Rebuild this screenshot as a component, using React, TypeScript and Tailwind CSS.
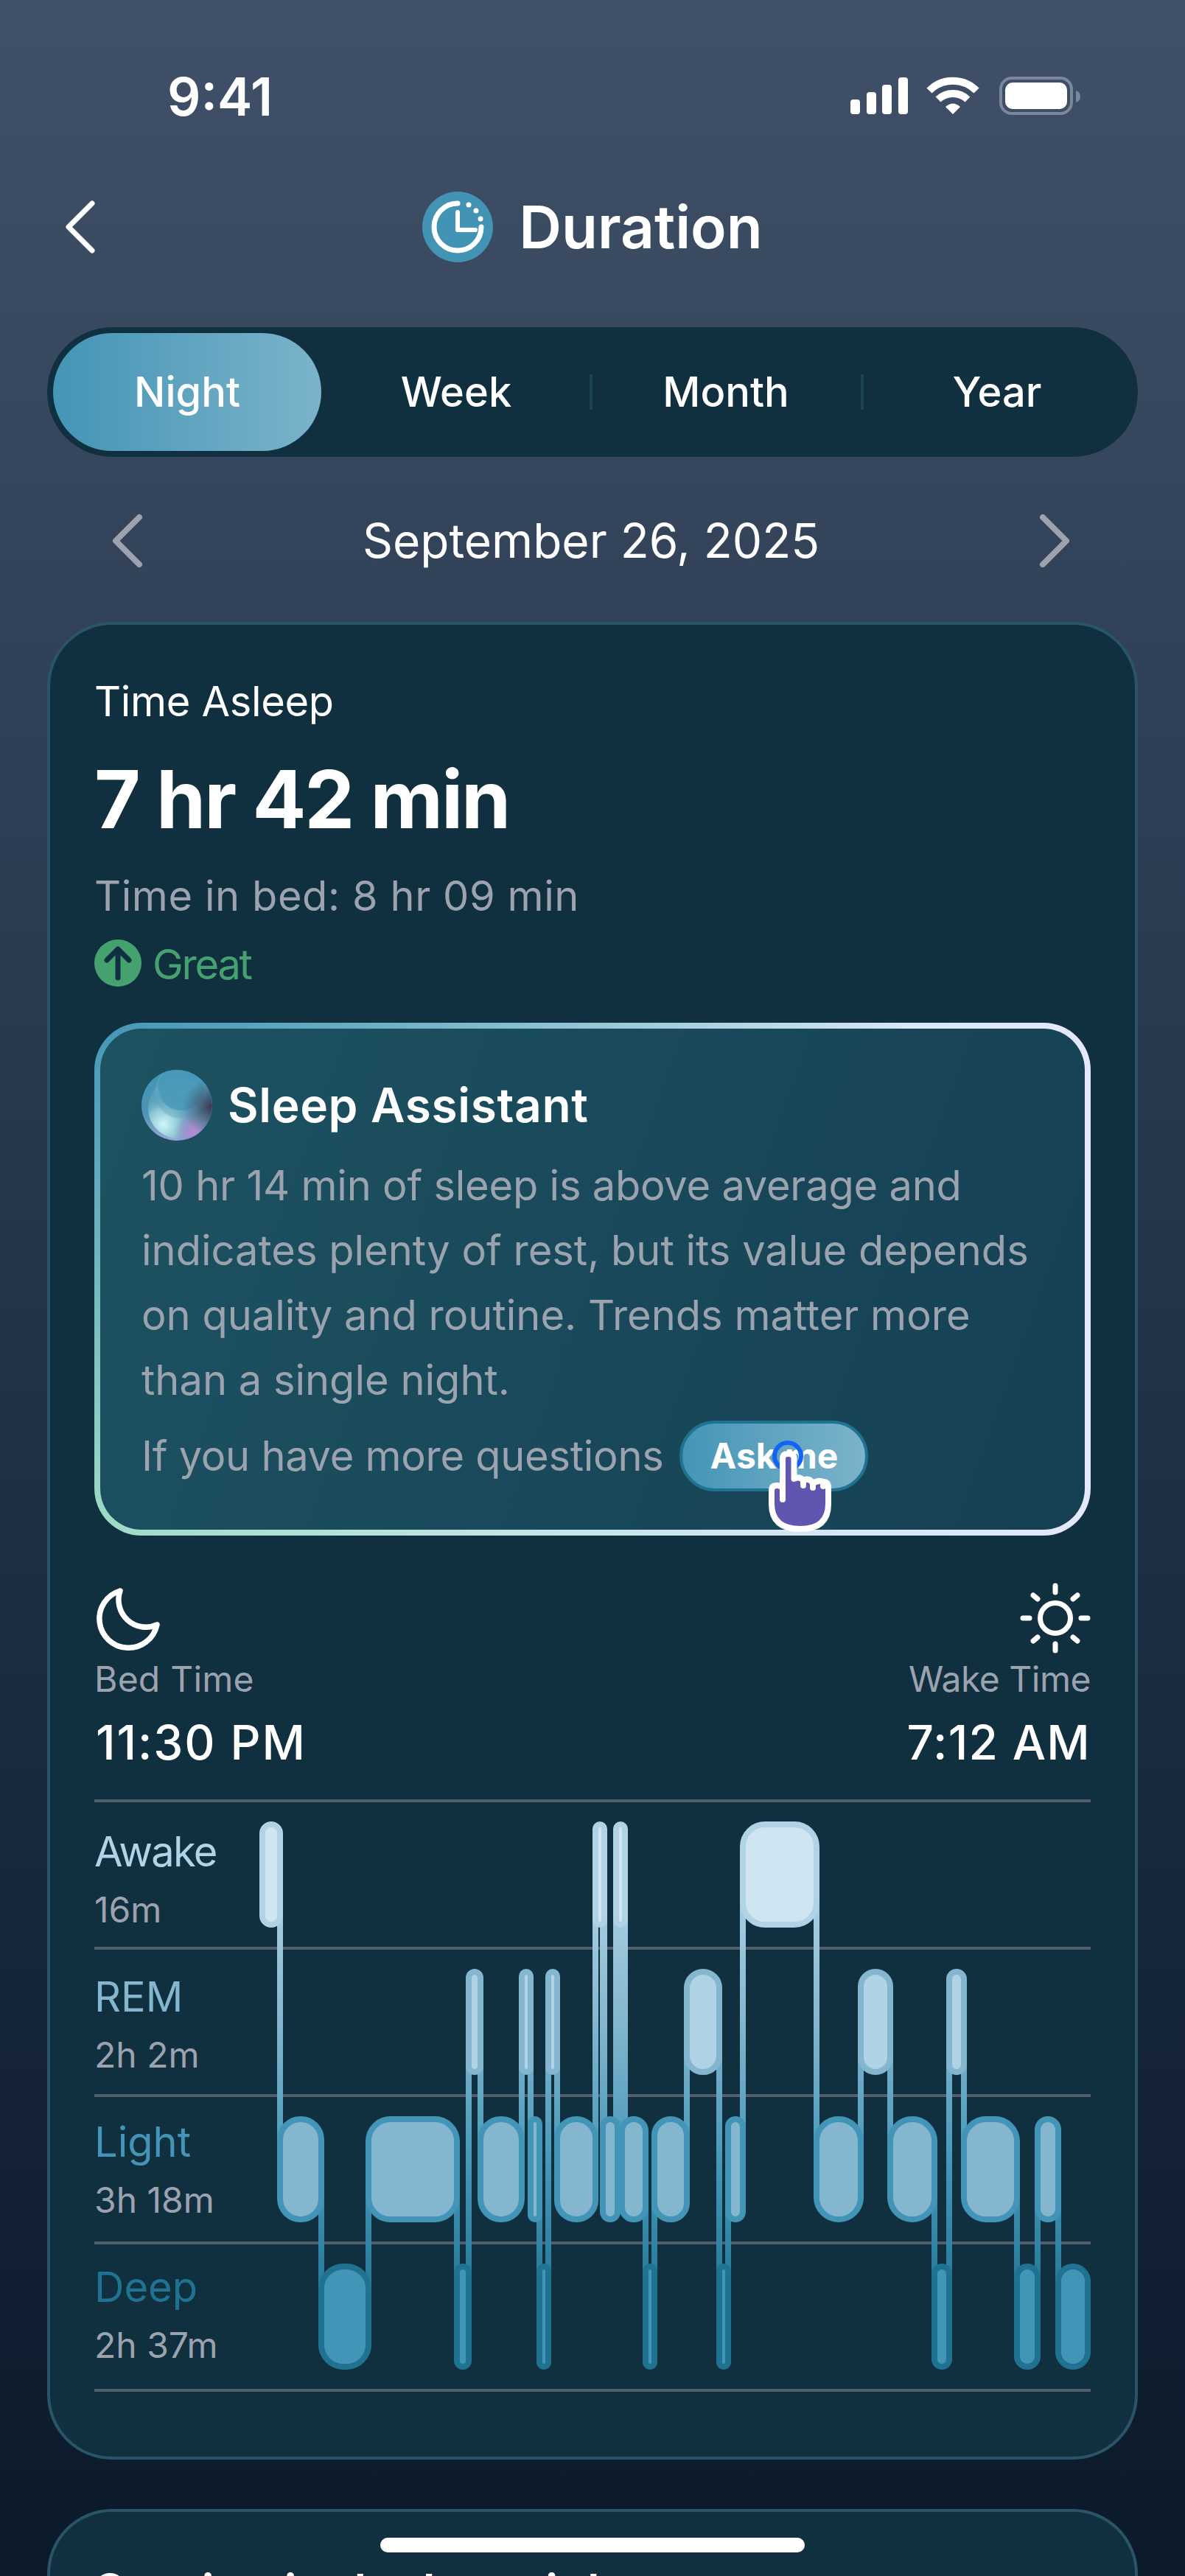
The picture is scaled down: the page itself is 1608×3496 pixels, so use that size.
const lanes = [
  { stroke: "#b0d4e6", fill: "#cfe6f2" },
  { stroke: "#84b7cf", fill: "#b0d2e5" },
  { stroke: "#4395b7", fill: "#84b7cf" },
  { stroke: "#1f7391", fill: "#4395b7" },
];

// lane, left, right in page pixels
const segments: [number, number, number][] = [
  [0, 352, 384],
  [2, 376, 440],
  [3, 432, 504],
  [2, 496, 624],
  [3, 616, 640],
  [1, 632, 656],
  [2, 648, 712],
  [1, 704, 724],
  [2, 716, 736],
  [3, 728, 748],
  [1, 740, 760],
  [2, 752, 812],
  [0, 804, 824],
  [2, 814, 842],
  [0, 832, 852],
  [2, 840, 880],
  [3, 872, 892],
  [2, 884, 936],
  [1, 928, 980],
  [3, 972, 992],
  [2, 984, 1012],
  [0, 1004, 1112],
  [2, 1104, 1172],
  [1, 1164, 1212],
  [2, 1204, 1272],
  [3, 1264, 1292],
  [1, 1284, 1312],
  [2, 1304, 1384],
  [3, 1376, 1412],
  [2, 1404, 1440],
  [3, 1432, 1480],
];

const rows = [
  { name: "Awake", time: "16m", color: "text-[#b0d4e6] tracking-[-0.03em]", pad: "pt-[35px]" },
  { name: "REM", time: "2h 2m", color: "text-[#84b7cf]", pad: "pt-[32px]" },
  { name: "Light", time: "3h 18m", color: "text-[#4395b7]", pad: "pt-[29px]" },
  { name: "Deep", time: "2h 37m", color: "text-[#1f7391]", pad: "pt-[26px]" },
];

const laneTop = (lane: number) => 2472 + lane * 200;

const StagesChart = () => (
  <svg viewBox="128 2442 1352 804" className="absolute left-0 -top-1 w-[1352px] h-[804px]" fill="none">
    <defs>
      <linearGradient id="laneFade" gradientUnits="userSpaceOnUse" x1="0" y1="2544" x2="0" y2="3144">
        <stop offset="0" stopColor="#b0d4e6" />
        <stop offset="0.33" stopColor="#84b7cf" />
        <stop offset="0.67" stopColor="#4395b7" />
        <stop offset="1" stopColor="#1f7391" />
      </linearGradient>
    </defs>
    {segments.slice(1).map(([lane, left], i) => {
      const prev = segments[i];
      const y1 = Math.min(laneTop(lane), laneTop(prev[0])) + 72;
      const y2 = Math.max(laneTop(lane), laneTop(prev[0])) + 72;
      return <rect key={i} x={left} y={y1} width={prev[2] - left} height={y2 - y1} fill="url(#laneFade)" />;
    })}
    {segments.map(([lane, left, right], i) => {
      const w = right - left - 8;
      return (
        <rect
          key={i}
          x={left + 4}
          y={laneTop(lane) + 4}
          width={w}
          height={136}
          rx={Math.min(w / 2, 30)}
          fill={lanes[lane].fill}
          stroke={lanes[lane].stroke}
          strokeWidth="8"
        />
      );
    })}
  </svg>
);

const Orb = () => (
  <svg viewBox="0 0 96 96" className="w-24 h-24 shrink-0">
    <defs>
      <linearGradient id="orbBase" x1="0" y1="0" x2="0" y2="1">
        <stop offset="0" stopColor="#4297b6" />
        <stop offset="0.6" stopColor="#4c93b3" />
        <stop offset="1" stopColor="#9aa6d6" />
      </linearGradient>
      <radialGradient id="orbLight" gradientUnits="userSpaceOnUse" cx="30" cy="74" r="42">
        <stop offset="0" stopColor="#d0f6fc" />
        <stop offset="0.5" stopColor="#8cc9d2" />
        <stop offset="1" stopColor="#4c97b4" stopOpacity="0" />
      </radialGradient>
      <radialGradient id="orbPurple" gradientUnits="userSpaceOnUse" cx="70" cy="84" r="26">
        <stop offset="0" stopColor="#b488d0" />
        <stop offset="1" stopColor="#a080c8" stopOpacity="0" />
      </radialGradient>
      <radialGradient id="orbDark" gradientUnits="userSpaceOnUse" cx="94" cy="50" r="38">
        <stop offset="0" stopColor="#3b3b55" />
        <stop offset="1" stopColor="#3f5068" stopOpacity="0" />
      </radialGradient>
      <clipPath id="orbClip">
        <circle cx="48" cy="48" r="48" />
      </clipPath>
    </defs>
    <circle cx="48" cy="48" r="48" fill="url(#orbBase)" />
    <g clipPath="url(#orbClip)">
      <circle cx="50" cy="52" r="41" fill="#e2f8fb" fillOpacity="0.12" />
      <circle cx="50" cy="52" r="41" fill="url(#orbLight)" />
      <circle cx="54" cy="30" r="36" fill="#6ba6c2" fillOpacity="0.45" />
      <circle cx="54" cy="24" r="31" fill="#4297b6" fillOpacity="0.7" />
      <circle cx="48" cy="48" r="48" fill="url(#orbPurple)" />
      <circle cx="48" cy="48" r="48" fill="url(#orbDark)" />
    </g>
  </svg>
);

const Hand = () => (
  <svg viewBox="0 0 90 116" className="absolute left-[115px] top-[35px] w-[90px] h-[116px] overflow-visible" fill="none">
    <circle cx="28" cy="9" r="18" stroke="#1264f5" strokeWidth="6" />
    <path
      d="M21 56V13Q21 6 28.5 6Q36.5 6 36.5 13V40Q44 36 49 42Q57 38 62 46Q70 41 76 44Q83 44 83 52V74Q83 108 45 108Q6 108 6 74V56Q6 49 13 49Q21 49 21 56Z"
      fill="#6056b0"
      stroke="#ffffff"
      strokeWidth="8"
      strokeLinejoin="round"
    />
    <path d="M21 54V68M49 42V49M62 46V52M76 44V50" stroke="#ffffff" strokeWidth="8" strokeLinecap="round" />
  </svg>
);

export default function App() {
  return (
    <div className="relative w-[1608px] h-[3496px] overflow-hidden bg-gradient-to-b from-[#3f5068] to-[#0a1a2b] text-white font-['Inter',sans-serif]">
      <div className="h-[260px] flex items-center justify-between pl-[227px] pr-[142px]">
        <p className="pt-0.5 text-[71px] leading-none font-semibold">9:41</p>
        <svg viewBox="1154 106 312 52" className="w-[312px] h-[52px]" fill="none">
          <rect x="1154" y="137" width="13" height="20" rx="4" fill="#fff" />
          <rect x="1176" y="127" width="13" height="30" rx="4" fill="#fff" />
          <rect x="1197" y="117" width="13" height="40" rx="4" fill="#fff" />
          <rect x="1219" y="107" width="13" height="50" rx="4" fill="#fff" />
          <path d="M1261 125A45 45 0 0 1 1325 125M1273 137A29 29 0 0 1 1313 137" stroke="#fff" strokeWidth="10" />
          <path d="M1283 147Q1293 138 1303 147L1293 157Z" fill="#fff" />
          <rect x="1358" y="108" width="96" height="48" rx="15" stroke="#7a8899" strokeWidth="4" />
          <rect x="1364" y="114" width="84" height="36" rx="10" fill="#fff" />
          <path d="M1460 125Q1466 127 1466 133Q1466 139 1460 141Z" fill="#7a8899" />
        </svg>
      </div>

      <div className="h-24 grid grid-cols-[1fr_auto_1fr] items-center pl-[88px]">
        <svg viewBox="0 0 44 72" className="w-11 h-[72px]" fill="none">
          <path d="M37 4L5 36L37 68" stroke="#fff" strokeWidth="7" strokeLinecap="round" strokeLinejoin="round" />
        </svg>
        <div className="flex items-center gap-[35px] mr-[88px]">
          <svg viewBox="0 0 96 96" className="w-24 h-24" fill="none">
            <circle cx="48" cy="48" r="48" fill="#4393b5" />
            <path d="M48 16A32 32 0 1 0 80 48" stroke="#fff" strokeWidth="7" strokeLinecap="round" />
            <path d="M48 28V52H72" stroke="#fff" strokeWidth="6" strokeLinecap="round" strokeLinejoin="round" />
            <circle cx="63" cy="18" r="3.5" fill="#fff" />
            <circle cx="73" cy="26" r="3.5" fill="#fff" />
            <circle cx="79" cy="37" r="3.5" fill="#fff" />
          </svg>
          <h1 className="text-[80px] leading-none font-semibold">Duration</h1>
        </div>
      </div>

      <div className="mt-[88px] mx-16 h-[176px] rounded-full bg-[#10303f] p-2 grid grid-cols-4 text-[56px] leading-none font-medium">
        <div className="rounded-full bg-gradient-to-r from-[#4395b6] to-[#7bb3cb] flex items-center justify-center mr-0.5">Night</div>
        <div className="flex items-center justify-center pr-1">Week</div>
        <div className="flex items-center">
          <div className="w-full h-12 -ml-1 flex items-center justify-center border-l-4 border-[#1c4355]">Month</div>
        </div>
        <div className="flex items-center">
          <div className="w-full h-12 -ml-0.5 flex items-center justify-center border-l-4 border-[#1c4355]">Year</div>
        </div>
      </div>

      <div className="mt-20 h-[68px] flex items-center justify-between pl-[152px] pr-[156px]">
        <svg viewBox="0 0 44 72" className="w-11 h-[72px]" fill="none">
          <path d="M37 4L5 36L37 68" stroke="#9ca3af" strokeWidth="8" strokeLinecap="round" strokeLinejoin="round" />
        </svg>
        <p className="text-[64px] leading-none">September 26, 2025</p>
        <svg viewBox="0 0 44 72" className="w-11 h-[72px]" fill="none">
          <path d="M7 4L39 36L7 68" stroke="#9ca3af" strokeWidth="8" strokeLinecap="round" strokeLinejoin="round" />
        </svg>
      </div>

      <div className="mt-[76px] mx-16 rounded-[88px] border-4 border-[#2a5568] bg-[#10303f] px-[60px] pt-[70px] pb-[88px]">
        <p className="text-[56px] leading-[68px] tracking-[-0.006em]">Time Asleep</p>
        <p className="mt-[39px] text-[108px] leading-[120px] font-bold tracking-[-0.02em]">7 hr 42 min</p>
        <p className="mt-[37px] text-[56px] leading-[68px] text-[#9ca3af] tracking-[0.01em]">Time in bed: 8 hr 09 min</p>
        <div className="mt-[25px] h-16 flex items-center gap-[15px]">
          <svg viewBox="0 0 64 64" className="w-16 h-16" fill="none">
            <circle cx="32" cy="32" r="32" fill="#45a26f" />
            <path d="M32 52V14M17 28L32 13L47 28" stroke="#10303f" strokeWidth="7" strokeLinecap="round" strokeLinejoin="round" />
          </svg>
          <p className="pt-1 text-[56px] leading-none text-[#45a26f] tracking-[-0.04em]">Great</p>
        </div>

        <div className="mt-[49px] h-[696px] rounded-[64px] p-2 bg-[radial-gradient(1100px_700px_at_0_0,#4596b8,#4596b800),linear-gradient(90deg,#a0dcc6,#c5e6e8_45%,#e4e8ff)]">
          <div className="h-full rounded-[56px] bg-[linear-gradient(110deg,#1d5261,#154053)] px-[56px] pt-[56px]">
            <div className="flex items-center gap-[21px]">
              <Orb />
              <h2 className="text-[64px] leading-none font-semibold tracking-[0.01em]">Sleep Assistant</h2>
            </div>
            <p className="mt-[17px] text-[56px] leading-[88px] text-[#9ba4ae]">
              <span className="tracking-[-0.004em]">10 hr 14 min of sleep is above average and</span>
              <br />
              indicates plenty of rest, but its value depends
              <br />
              on quality and routine. Trends matter more
              <br />
              than a single night.
            </p>
            <div className="mt-[11px] flex items-center gap-[22px]">
              <p className="text-[56px] leading-none text-[#9ba4ae] tracking-[-0.005em]">If you have more questions</p>
              <div className="relative w-64 h-24 rounded-full border-4 border-[#1f7391] bg-gradient-to-r from-[#4395b6] to-[#7bb3cb] flex items-center justify-center text-[48px] leading-none font-bold">
                Ask me
                <Hand />
              </div>
            </div>
          </div>
        </div>

        <div className="mt-[66px] flex justify-between">
          <div>
            <svg viewBox="0 0 96 96" className="w-24 h-24" fill="none">
              <path d="M35 9A39.5 39.5 0 1 0 85 55A37 37 0 0 1 35 9Z" stroke="#fff" strokeWidth="7.5" strokeLinejoin="round" />
            </svg>
            <p className="mt-[5px] text-[48px] leading-[56px] text-[#9ca3af] tracking-[0.005em]">Bed Time</p>
            <p className="mt-[22px] pl-0.5 text-[64px] leading-[72px] font-medium tracking-[0.03em]">11:30 PM</p>
          </div>
          <div className="flex flex-col items-end">
            <svg viewBox="0 0 96 96" className="w-24 h-24 overflow-visible" fill="none">
              <circle cx="48" cy="46" r="20.5" stroke="#fff" strokeWidth="7" />
              <path
                d="M48 2V11M48 81V90M4 46H13M83 46H92M18 15L24 20M78 15L72 20M18 77L24 72M78 77L72 72"
                stroke="#fff"
                strokeWidth="7"
                strokeLinecap="round"
              />
            </svg>
            <p className="mt-[5px] text-[48px] leading-[56px] text-[#9ca3af] tracking-[-0.01em]">Wake Time</p>
            <p className="mt-[22px] text-[64px] leading-[72px] font-medium tracking-[0.02em]">7:12 AM</p>
          </div>
        </div>

        <div className="relative mt-[41px] border-t-4 border-[#555f6b]">
          {rows.map((row) => (
            <div key={row.name} className={`h-[200px] border-b-4 border-[#555f6b] ${row.pad}`}>
              <p className={`text-[56px] leading-[64px] ${row.color}`}>{row.name}</p>
              <p className="mt-[19px] text-[48px] leading-[56px] text-[#9ca3af]">{row.time}</p>
            </div>
          ))}
          <StagesChart />
        </div>
      </div>

      <div className="mt-[67px] mx-16 h-[300px] rounded-[88px] border-4 border-[#2a5568] bg-[#10303f] px-[60px] pt-[72px]">
        <p className="text-[64px] leading-[72px] font-semibold">Snoring in the last night</p>
      </div>

      <div className="absolute left-[516px] top-[3444px] w-[576px] h-5 rounded-full bg-white" />
    </div>
  );
}
